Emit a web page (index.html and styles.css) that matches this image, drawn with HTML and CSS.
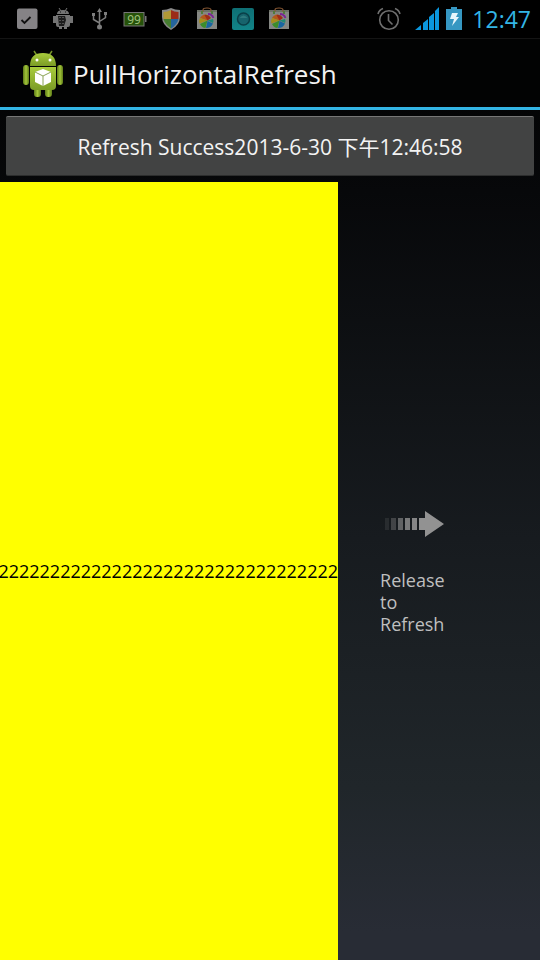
FILE: index.html
```html
<!DOCTYPE html>
<html lang="en">
<head>
<meta charset="utf-8">
<meta name="viewport" content="width=device-width, initial-scale=1">
<title>PullHorizontalRefresh</title>
<link rel="stylesheet" href="styles.css">
</head>
<body>
<svg class="defs" aria-hidden="true">
  <defs>
    <linearGradient id="green" x1="0" x2="0" y1="0" y2="1"><stop offset="0" stop-color="#a9cc3c"/><stop offset="1" stop-color="#7b9c26"/></linearGradient>
    <linearGradient id="limb" x1="0" x2="1"><stop offset="0" stop-color="#5d7a18"/><stop offset=".5" stop-color="#a2c53a"/><stop offset="1" stop-color="#5d7a18"/></linearGradient>
    <linearGradient id="teal" x1="0" x2="0" y1="0" y2="1"><stop offset="0" stop-color="#0e6f74"/><stop offset="1" stop-color="#128488"/></linearGradient>
    <symbol id="bag" viewBox="0 0 24 24">
      <path d="M2 3h20v19H2z" fill="#858783"/>
      <path d="M2 3h20v2H2z" fill="#6d7268"/>
      <path d="M8 5V3q0-2 4-2t4 2v2" fill="none" stroke="#8a5a35" stroke-width="1.200"/>
      <path d="M6 4h2v3H6zM16 4h2v3h-2z" fill="#527a3c"/>
      <path d="M13 7q4 0 5.500 4" fill="none" stroke="#7a2496" stroke-width="1.800"/>
      <path d="M12.500 13.500L5 11q2-3.500 5.500-3.500 3.500 1.500 2 6z" fill="#b3591a"/>
      <path d="M12.500 13.500L9.500 8q4-1 6.500 3z" fill="#a02c18"/>
      <path d="M12.500 13.500L4.500 16.500q-1-3 .5-5.500z" fill="#a78d1a"/>
      <path d="M12.500 13.500L5 17q2 4 5.500 4z" fill="#3c8d2a"/>
      <path d="M12.500 14l-1.500 7q5 0 7-4.500z" fill="#1766a0"/>
      <path d="M12.500 13.500l5.500 2.500q1-2 0-4z" fill="#1f8a74"/>
    </symbol>
  </defs>
</svg>
<div class="status">
  <div class="notices">
    <svg viewBox="0 0 24 24"><rect x="2" y="1.500" width="20.500" height="20.500" rx="2" fill="#858386"/><path d="M6.500 13l3 3 6-6" fill="none" stroke="#111" stroke-width="1.800"/></svg>
    <svg viewBox="0 0 24 24"><g fill="#747474"><path d="M6 7q0-4 6-4t6 4zM5 8h14v10q0 2-2 2H7q-2 0-2-2zM2 9h3v7H2zM19 9h3v7h-3zM8 19h3v3H8zM13 19h3v3h-3z"/><path d="M8 1l2 3M16 1l-2 3" stroke="#747474"/></g><path d="M7 9h7l1 4-2 6H8z" fill="#1c1c1c"/><path d="M9 10v8M12 10v7" stroke="#888" stroke-dasharray="1 2"/><path d="M9 5h1M14 5h1" stroke="#111"/></svg>
    <svg viewBox="0 0 24 24" fill="none" stroke="#7d7d7d" stroke-width="1.500"><path d="M12.500 4v14M6.500 8v4.500l6 3.500M18.500 7v3.500l-6 4"/><path d="M12.500 1l2.500 4h-5zM5 6h3v3H5zM17 5h3v3h-3z" fill="#7d7d7d" stroke="none"/><circle cx="12.500" cy="20" r="2.500" fill="#7d7d7d" stroke="none"/></svg>
    <svg viewBox="0 0 24 24"><rect x="1" y="5.500" width="20" height="13.500" fill="#26520a" stroke="#777"/><path d="M22 9h1.500v6H22z" fill="#777"/><text x="11" y="16.500" text-anchor="middle" class="level">99</text></svg>
    <svg viewBox="0 0 24 24"><path d="M12 1q4 2 9 2v7q0 8-9 13-9-5-9-13V3q5 0 9-2z" fill="#898989"/><path d="M12 3v9H4.500V5q4 0 7.500-2z" fill="#b19836"/><path d="M12 3q3 2 7.500 2v7H12z" fill="#9c2c18"/><path d="M4.500 12H12v9.500q-6-4-7.500-9.500z" fill="#467d30"/><path d="M12 12h7.500q-1.500 6-7.500 9.500z" fill="#24649c"/></svg>
    <svg viewBox="0 0 24 24"><use href="#bag"/></svg>
    <svg viewBox="0 0 24 24"><rect x="1" y="1" width="22" height="22" rx="2" fill="url(#teal)"/><circle cx="12.500" cy="12" r="6" fill="#17636c" stroke="#0a3f48" stroke-width="1.500"/><path d="M8.500 11q4-5 8 0z" fill="#2f7a7e"/></svg>
    <svg viewBox="0 0 24 24"><use href="#bag"/></svg>
  </div>
  <div class="system">
    <svg viewBox="0 0 24 24" fill="none" stroke="#707070" stroke-width="1.600"><circle cx="12" cy="13" r="9.300"/><path d="M11.500 7v6.500l4 4M1 7q1-4 5-5.500M18 1.500q4 1.500 5 5.500"/></svg>
    <svg class="signal" viewBox="0 0 24 24" fill="#0b96dc"><path d="M0 23l6-5v5zM8 16l5-4v11H8zM14 10l5-4v17h-5zM20 4l4-4v23h-4z"/></svg>
    <svg class="battery" viewBox="0 0 16 24"><path d="M5 0h6v2h5v21H0V2h5z" fill="#3697c2"/><path d="M6 6h6l-2 4h3l-7 9 2-7H4z" fill="#e8f6fc"/></svg>
    <time>12:47</time>
  </div>
</div>
<header class="bar">
  <svg class="logo" viewBox="0 0 42 48" aria-hidden="true">
    <path d="M12 1l4 6M30 1l-4 6" stroke="#78962a" stroke-width="1.500"/>
    <path d="M8 16Q8 3 21 3t13 13z" fill="url(#green)"/>
    <circle cx="15" cy="10" r="1.500" fill="#fff"/><circle cx="28" cy="10" r="1.500" fill="#fff"/>
    <rect x="1" y="15" width="6" height="20" rx="3" fill="url(#limb)"/><rect x="35" y="15" width="6" height="20" rx="3" fill="url(#limb)"/>
    <rect x="12" y="36" width="7" height="11" rx="3" fill="url(#limb)"/><rect x="23" y="36" width="7" height="11" rx="3" fill="url(#limb)"/>
    <path d="M8 17h26v19q0 4-4 4H12q-4 0-4-4z" fill="url(#green)"/>
    <path d="M21 19l8 3v10l-8 4-8-4V22z" fill="#fff"/><path d="M13 22l8 4 8-4M21 26v10" fill="none" stroke="#8ba456"/>
  </svg>
  <h1>PullHorizontalRefresh</h1>
</header>
<main>
  <button class="refresh" type="button">Refresh Success2013-6-30 下午12:46:58</button>
  <div class="pager">
    <section class="page"><p>2222222222222222222222222222222222</p></section>
    <aside class="pull">
      <svg class="arrow" viewBox="0 0 62 26" aria-hidden="true" fill="#929292"><path d="M36 7h6V0l19 13-19 13v-7h-6z"/><path d="M29 7h5v12h-5z" opacity=".9"/><path d="M22 7h5v12h-5z" opacity=".8"/><path d="M15 7h5v12h-5z" opacity=".6"/><path d="M8 7h5v12H8z" opacity=".35"/><path d="M2 7h4v12H2z" opacity=".15"/></svg>
      <p>Release to Refresh</p>
    </aside>
  </div>
</main>
</body>
</html>
```
FILE: styles.css
```css
* { box-sizing: border-box; }
body {
  margin: 0;
  min-height: 100vh;
  display: flex;
  flex-direction: column;
  background: linear-gradient(#000 0%, #07080a 20%, #171b1f 56%, #20262a 82%, #282c35 97%);
  color: #f3f3f3;
  font-family: "Open Sans", "Noto Sans", "Noto Sans CJK SC", sans-serif;
}
h1, p { margin: 0; font-weight: 400; }
svg { display: block; flex: none; }
.defs { position: absolute; width: 0; height: 0; }
.status {
  height: 39px;
  display: flex;
  align-items: center;
  justify-content: space-between;
  padding: 0 9px 0 15px;
  background: #000;
  border-bottom: 1px solid #141414;
}
.notices, .system { display: flex; align-items: center; }
.notices { gap: 12px; }
.notices svg, .system svg { width: 24px; height: 24px; }
.level { font: 12px "Noto Sans", sans-serif; fill: #9fc07c; }
.system .signal { margin-left: 14px; }
.system .battery { width: 16px; margin: 0 10px 0 7px; }
time { font-size: 23px; line-height: 38px; color: #33b5e5; }
.bar {
  height: 71px;
  display: flex;
  align-items: center;
  gap: 9px;
  padding: 2px 0 0 22px;
  background: #020303;
  border-bottom: 3px solid #33b5e5;
}
.logo { width: 42px; height: 48px; }
h1 { font-size: 26px; line-height: 36px; }
main { flex: 1; display: flex; flex-direction: column; }
.refresh {
  height: 60px;
  margin: 6px;
  padding: 0;
  border: 0;
  border-top: 1px solid #777;
  border-bottom: 1px solid #2c2d2d;
  border-radius: 2px;
  background: #424343;
  color: inherit;
  font: inherit;
  font-size: 21px;
}
.pager { flex: 1; display: flex; }
.page {
  width: 62.600%;
  display: flex;
  align-items: center;
  justify-content: flex-end;
  overflow: hidden;
  background: #ff0;
  color: #000;
  font-size: 18px;
  line-height: 22px;
}
.pull {
  flex: 1;
  display: flex;
  flex-direction: column;
  justify-content: center;
  gap: 32px;
  padding: 3px 0 0 42px;
  color: #bfbfbf;
  font-size: 18px;
  line-height: 22px;
}
.pull p { width: 72px; }
.arrow { width: 62px; height: 26px; margin-left: 3px; }
```
